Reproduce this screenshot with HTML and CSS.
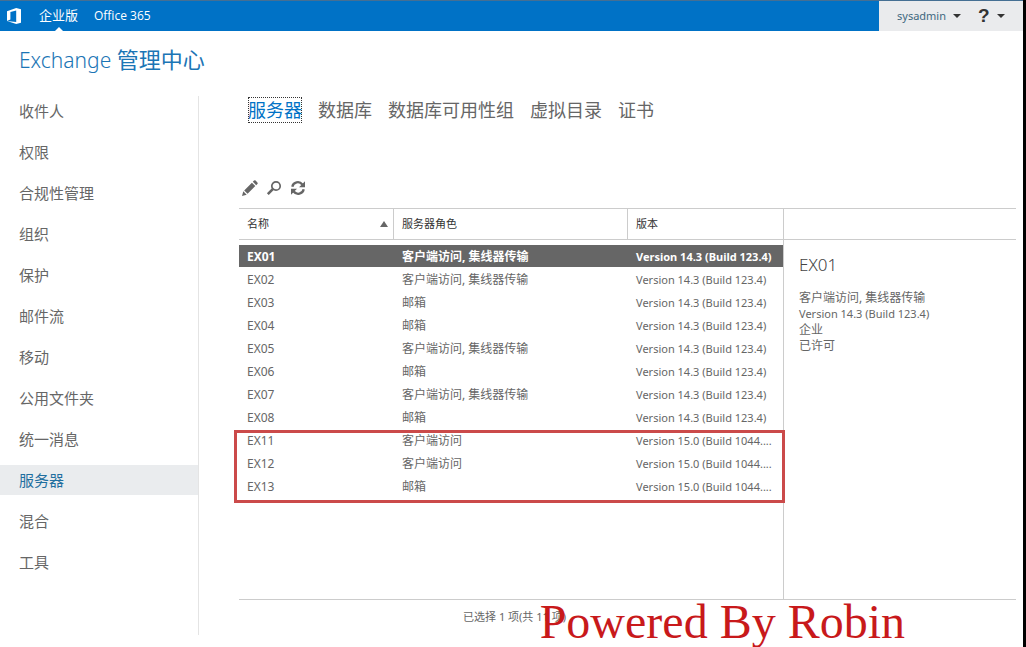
FILE: index.html
```html
<!DOCTYPE html>
<html lang="zh-CN">
<head>
<meta charset="utf-8">
<meta name="viewport" content="width=device-width, initial-scale=1">
<title>Exchange 管理中心</title>
<link rel="stylesheet" href="styles.css">
</head>
<body>
<div class="app">
  <header class="topbar">
    <svg class="logo" viewBox="0 0 18 18" role="img" aria-label="Office"><path fill="#fff" fill-rule="evenodd" d="M1 4.2 10.2 1 15 2.2V15.8L10.2 17 1 13.9 10.2 14.9V3.5L4.4 4.9V12.5L1 13.9Z"/></svg>
    <nav class="topnav">
      <a class="toplink current" href="#">企业版</a>
      <a class="toplink" href="#">Office 365</a>
    </nav>
    <div class="account">
      <button class="user" type="button">sysadmin<span class="caret"></span></button>
      <button class="help" type="button" aria-label="帮助"><span class="mark">?</span><span class="caret"></span></button>
    </div>
  </header>
  <h1 class="title">Exchange <span class="title-cn">管理中心</span></h1>
  <div class="layout">
    <nav class="side">
      <a class="side-link" href="#">收件人</a>
      <a class="side-link" href="#">权限</a>
      <a class="side-link" href="#">合规性管理</a>
      <a class="side-link" href="#">组织</a>
      <a class="side-link" href="#">保护</a>
      <a class="side-link" href="#">邮件流</a>
      <a class="side-link" href="#">移动</a>
      <a class="side-link" href="#">公用文件夹</a>
      <a class="side-link" href="#">统一消息</a>
      <a class="side-link selected" href="#">服务器</a>
      <a class="side-link" href="#">混合</a>
      <a class="side-link" href="#">工具</a>
    </nav>
    <main class="main">
      <nav class="tabs">
        <a class="tab active" href="#">服务器</a>
        <a class="tab" href="#">数据库</a>
        <a class="tab" href="#">数据库可用性组</a>
        <a class="tab" href="#">虚拟目录</a>
        <a class="tab" href="#">证书</a>
      </nav>
      <div class="tools">
        <button class="tool" type="button" aria-label="编辑"><svg viewBox="0 0 16 16"><path fill="#666" d="M0 16 1.3 11.3 4.7 14.7ZM2.2 10.4 9.9 2.7 13.3 6.1 5.6 13.8ZM10.8 1.8 12 .6Q12.8-.1 13.6.6L15.4 2.4Q16.1 3.2 15.4 4L14.2 5.2Z"/></svg></button>
        <button class="tool" type="button" aria-label="搜索"><svg viewBox="0 0 16 16"><circle cx="10" cy="6" r="4.2" fill="none" stroke="#666" stroke-width="1.7"/><path stroke="#666" stroke-width="2.6" d="M6.8 9.2 1.8 14.2"/></svg></button>
        <button class="tool" type="button" aria-label="刷新"><svg viewBox="0 0 16 16"><path fill="none" stroke="#666" stroke-width="2.3" d="M2.3 6.8A5.6 5.6 0 0 1 12.3 4.5M13.7 9.2A5.6 5.6 0 0 1 3.7 11.5"/><path fill="#666" d="M15 1.2V7.2H9ZM1 14.8V8.8H7Z"/></svg></button>
      </div>
      <div class="panel">
        <div class="list">
          <table class="servers">
            <colgroup><col class="c-name"><col class="c-role"><col class="c-version"></colgroup>
            <thead><tr><th class="sorted">名称</th><th>服务器角色</th><th>版本</th></tr></thead>
            <tbody class="rows">
              <tr class="picked"><td>EX01</td><td>客户端访问, 集线器传输</td><td>Version 14.3 (Build 123.4)</td></tr>
              <tr><td>EX02</td><td>客户端访问, 集线器传输</td><td>Version 14.3 (Build 123.4)</td></tr>
              <tr><td>EX03</td><td>邮箱</td><td>Version 14.3 (Build 123.4)</td></tr>
              <tr><td>EX04</td><td>邮箱</td><td>Version 14.3 (Build 123.4)</td></tr>
              <tr><td>EX05</td><td>客户端访问, 集线器传输</td><td>Version 14.3 (Build 123.4)</td></tr>
              <tr><td>EX06</td><td>邮箱</td><td>Version 14.3 (Build 123.4)</td></tr>
              <tr><td>EX07</td><td>客户端访问, 集线器传输</td><td>Version 14.3 (Build 123.4)</td></tr>
              <tr><td>EX08</td><td>邮箱</td><td>Version 14.3 (Build 123.4)</td></tr>
            </tbody>
            <tbody class="marked">
              <tr><td>EX11</td><td>客户端访问</td><td>Version 15.0 (Build 1044....</td></tr>
              <tr><td>EX12</td><td>客户端访问</td><td>Version 15.0 (Build 1044....</td></tr>
              <tr><td>EX13</td><td>邮箱</td><td>Version 15.0 (Build 1044....</td></tr>
            </tbody>
          </table>
        </div>
        <aside class="detail">
          <div class="detail-head"></div>
          <div class="detail-body">
            <h2 class="detail-title">EX01</h2>
            <p class="line">客户端访问, 集线器传输</p>
            <p class="line latin">Version 14.3 (Build 123.4)</p>
            <p class="line">企业</p>
            <p class="line">已许可</p>
          </div>
        </aside>
      </div>
      <footer class="status">已选择 1 项(共 11 项)<span class="watermark">Powered By Robin</span></footer>
    </main>
  </div>
</div>
</body>
</html>
```
FILE: styles.css
```css
* { box-sizing: border-box; }
body {
  margin: 0;
  background: #fff;
  color: #666;
  font: 12px/16px "Noto Sans", "Noto Sans CJK SC", sans-serif;
}
a { color: inherit; text-decoration: none; }
button { border: 0; padding: 0; background: none; color: inherit; font: inherit; }
.app {
  min-height: 100vh;
  display: flex;
  flex-direction: column;
  border-right: 3px solid #000;
  overflow: hidden;
}

.topbar {
  display: flex;
  height: 31px;
  border-top: 1px solid #456f93;
  background: #0072c6;
  color: #fff;
}
.logo { width: 18px; height: 18px; margin: 6px 0 0 6px; }
.topnav { display: flex; flex: 1; gap: 16px; padding-left: 15px; }
.toplink { position: relative; font: 12px/29px "Open Sans", "Noto Sans CJK SC", sans-serif; }
.toplink.current { font-size: 13px; }
.current::after {
  content: "";
  position: absolute;
  left: 50%;
  bottom: 0;
  margin-left: -4px;
  border: 4px solid transparent;
  border-top: 0;
  border-bottom-color: #fff;
}
.account {
  display: flex;
  gap: 17px;
  width: 144px;
  padding-left: 18px;
  background: #eaebed;
}
.user, .help { display: flex; align-items: center; gap: 7px; }
.user { color: #41687f; font-size: 11px; }
.mark { color: #333; font: bold 19px/28px "Liberation Sans", sans-serif; }
.caret { border: 4px solid transparent; border-bottom: 0; border-top-color: #333; }

.title {
  margin: 0;
  padding: 12px 19px 0;
  height: 65px;
  color: #1b75b5;
  font: 300 21px/32px "Noto Sans", "Noto Sans CJK SC", sans-serif;
}
.title-cn { font-size: 22px; font-weight: 400; }

.layout { display: flex; flex: 1; }
.side {
  display: flex;
  flex: 0 0 199px;
  flex-direction: column;
  align-self: flex-start;
  gap: 11px;
  padding-bottom: 58px;
  border-right: 1px solid #e4e4e4;
}
.side-link { padding-left: 19px; font-size: 15px; line-height: 30px; }
.side-link.selected { background: #eaecee; color: #1f6f9f; }

.main {
  display: flex;
  flex: 1;
  flex-direction: column;
  min-width: 0;
  padding: 0 7px 0 40px;
}
.tabs { display: flex; gap: 16px; padding: 1px 0 0 9px; }
.tab { font-size: 18px; line-height: 26px; white-space: nowrap; }
.tab.active { color: #0072c6; outline: 1px dotted #333; outline-offset: -1px; }
.tools { display: flex; gap: 8px; padding: 57px 0 12px 3px; }
.tool { width: 16px; height: 16px; }
.tool svg { display: block; width: 16px; height: 16px; }

.panel {
  display: grid;
  grid-template-columns: 545fr 232fr;
  flex: 1;
  border: solid #ccc;
  border-width: 1px 0;
}
.list { border-right: 1px solid #ccc; }
.servers { width: 100%; table-layout: fixed; border-collapse: separate; border-spacing: 0; }
.c-name { width: 155px; }
.c-version { width: 155px; }
th {
  height: 31px;
  padding: 0 8px;
  border: solid #ccc;
  border-width: 0 1px 1px 0;
  color: #333;
  font-weight: 400;
  font-size: 11px;
  text-align: left;
}
th:last-child { border-right: 0; }
.sorted { position: relative; }
.sorted::after {
  content: "";
  position: absolute;
  right: 5px;
  top: 12px;
  border: 4px solid transparent;
  border-top: 0;
  border-bottom: 6px solid #666;
}
td {
  height: 23px;
  padding: 2px 0 0 8px;
  border-bottom: 1px solid #fff;
  white-space: nowrap;
}
td:last-child, .latin { font-size: 11px; }
.rows::before { content: ""; display: block; height: 5px; }
.picked td { background: #666; background-clip: padding-box; color: #fff; font-weight: 700; }
.marked { position: relative; }
.marked::after {
  content: "";
  position: absolute;
  inset: 1px -2px -5px -5px;
  border: 3px solid #cb4a4a;
  pointer-events: none;
}
.detail-head { height: 31px; border-bottom: 1px solid #ccc; }
.detail-body { padding: 14px 15px; }
.detail-title { margin: 0 0 14px; font: 300 17px/22px "Noto Sans", sans-serif; color: #444; }
.line { margin: 0; }

.status {
  position: relative;
  height: 47px;
  padding-top: 9px;
  padding-right: 226px;
  font-size: 11px;
  text-align: center;
}
.watermark {
  position: absolute;
  right: 111px;
  top: 0;
  color: #c8191b;
  font: 48px/44px "Liberation Serif", serif;
  white-space: nowrap;
}
```
